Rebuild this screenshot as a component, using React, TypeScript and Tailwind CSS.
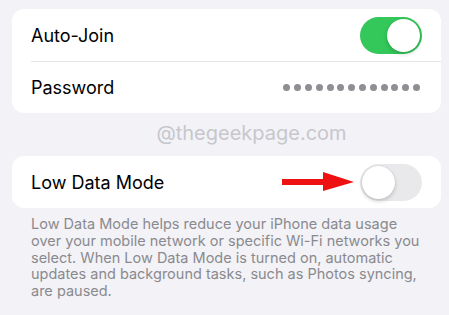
import React from "react";

function Toggle({ on }: { on: boolean }) {
  return (
    <div
      className={`flex h-[37px] w-[62px] items-center rounded-full p-[2px] ${
        on ? "justify-end bg-[#34c759]" : "justify-start bg-[#e9e9eb]"
      }`}
    >
      <div className="h-[33px] w-[33px] rounded-full bg-white shadow-[0_2px_4px_rgba(0,0,0,0.18),0_0_1px_rgba(0,0,0,0.15)]" />
    </div>
  );
}

export default function App() {
  return (
    <div
      className="h-[315px] w-[449px] overflow-hidden bg-[#f2f2f7] pl-3 pr-2 pt-[9px]"
      style={{ fontFamily: "Inter, 'Noto Sans', sans-serif" }}
    >
      <div className="rounded-[12px] bg-white">
        <div className="flex h-[52px] items-center justify-between pl-[19px] pr-[19px]">
          <span className="text-[18px] text-black">Auto-Join</span>
          <Toggle on />
        </div>
        <div className="ml-[19px] h-px bg-[#e5e5ea]" />
        <div className="flex h-[51px] items-center justify-between pl-[19px] pr-[21px]">
          <span className="text-[18px] text-black">Password</span>
          <div className="flex gap-[3.8px]">
            {Array.from({ length: 13 }).map((_, i) => (
              <span key={i} className="h-[7px] w-[7px] rounded-full bg-[#8e8e93]" />
            ))}
          </div>
        </div>
      </div>

      <div className="flex h-[43px] items-center justify-center pb-[4px] pl-[50px]">
        <span className="text-[20px] text-[#c7c7cc]">@thegeekpage.com</span>
      </div>

      <div className="flex h-[52px] items-center rounded-[12px] bg-white pl-[19px] pr-[19px]">
        <span className="text-[18px] text-black">Low Data Mode</span>
        <div className="ml-auto flex items-center gap-[4px]">
          <svg width="74" height="20" viewBox="0 0 74 20">
            <rect x="0" y="7" width="42" height="6" fill="#ee1111" />
            <polygon points="41,0 72,10 41,19" fill="#ee1111" />
          </svg>
          <Toggle on={false} />
        </div>
      </div>

      <p className="mt-[8px] pl-[19px] pr-[10px] text-[14.5px] leading-[16.8px] text-[#8a8a8e]">
        Low Data Mode helps reduce your iPhone data usage over your mobile network or specific
        Wi-Fi networks you select. When Low Data Mode is turned on, automatic updates and
        background tasks, such as Photos syncing, are paused.
      </p>
    </div>
  );
}
